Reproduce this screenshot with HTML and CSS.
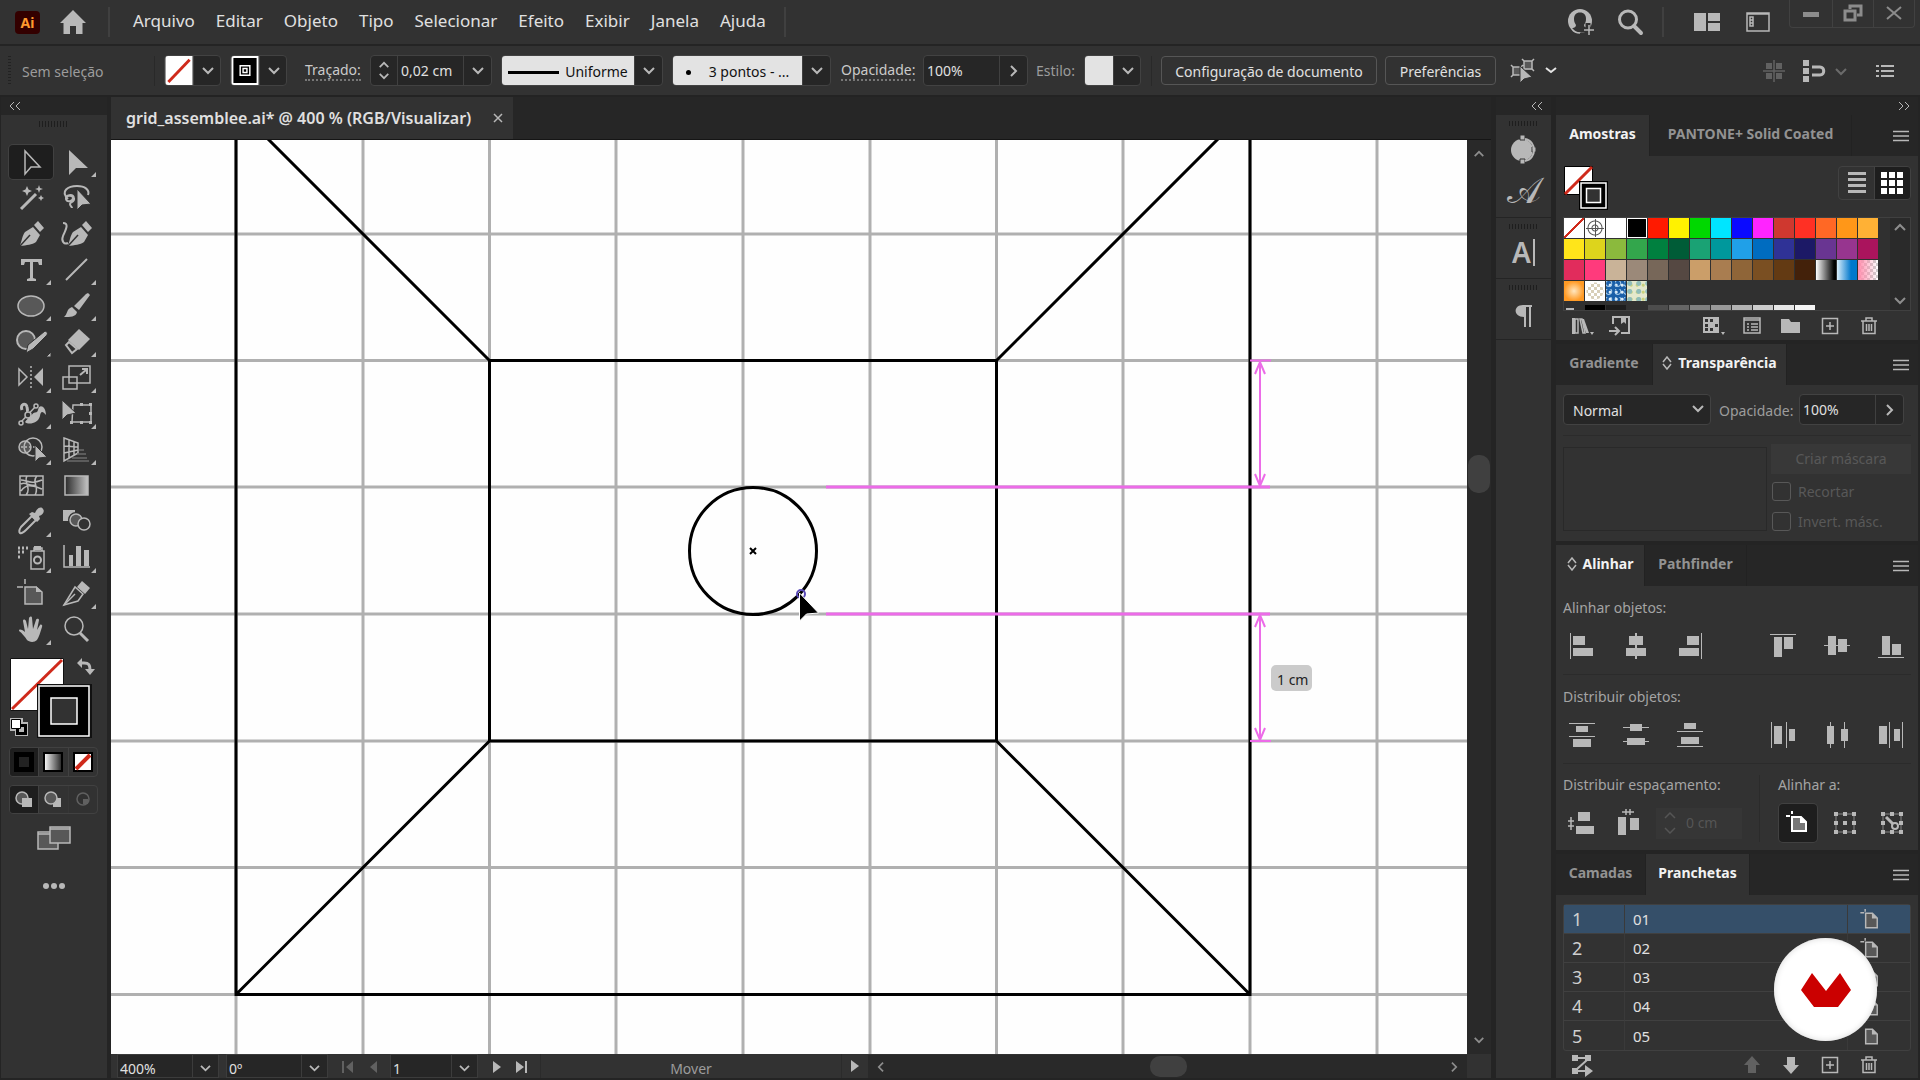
FILE: index.html
```html
<!DOCTYPE html>
<html lang="pt-BR">
<head>
<meta charset="utf-8">
<meta name="viewport" content="width=device-width, initial-scale=1">
<title>grid_assemblee.ai</title>
<link rel="stylesheet" href="styles.css">
</head>
<body>
<svg class="defs" aria-hidden="true">
  <symbol id="down" viewBox="0 0 14 10"><path class="ln2" d="M2 2l5 5 5-5"/></symbol>
  <symbol id="up" viewBox="0 0 14 10"><path class="ln2" d="M2 8l5-5 5 5"/></symbol>
  <symbol id="right" viewBox="0 0 10 14"><path class="ln2" d="M2 2l5 5-5 5"/></symbol>
  <symbol id="left" viewBox="0 0 10 14"><path class="ln2" d="M8 2L3 7l5 5"/></symbol>
  <symbol id="menu" viewBox="0 0 16 12"><path class="ln" d="M0 1.500h16M0 6h16M0 10.500h16"/></symbol>
  <symbol id="plus" viewBox="0 0 28 28"><path class="ln" d="M6.500 6.500h15v15h-15zM14 10v8M10 14h8"/></symbol>
  <symbol id="trash" viewBox="0 0 28 28"><path class="ln" d="M6 9h16M8 9v12.500h12V9M11 9V6h6v3M11.500 12v7M14 12v7M16.500 12v7"/></symbol>
  <symbol id="board" viewBox="0 0 28 28"><path class="ghost" d="M9.500 7.500h7l5 5v10h-12z"/><path class="ln" d="M9.500 7.500h7l5 5v10h-12z"/><path d="M16 7v6h6z"/></symbol>
  <symbol id="boardx" viewBox="0 0 28 28"><path class="ghost" d="M9.500 7.500h7l5 5v10h-12z"/><path class="ln" d="M9.500 7.500h7l5 5v10h-12zM9 3v3M4 7h4"/><path d="M16 7v6h6z"/></symbol>
  <symbol id="sort" viewBox="0 0 10 14"><path class="ln" d="M1 6l4-5 4 5M1 8l4 5 4-5"/></symbol>
  <symbol id="fs" viewBox="0 0 46 46">
    <path fill="#fff" stroke="#000" d="M1.500 1.500h28v28h-28z"/><path stroke="#cf2a1b" stroke-width="3" d="M2 29L29 2"/>
    <path fill="#000" d="M16 16h29v29H16z"/><path fill="#000" stroke="#fff" stroke-width="1.500" d="M18 18h25v25H18z"/><path fill="#323232" stroke="#fff" stroke-width="1.500" d="M23.500 23.500h14v14h-14z"/>
  </symbol>
</svg>

<header class="menubar">
  <span class="ai">Ai</span>
  <button class="ib home" aria-label="Início"><svg width="28" height="26" viewBox="0 0 28 26"><path d="M14 1L1 14h3.500v11H11v-8h6v8h6.500V14H27z"/></svg></button>
  <nav class="menus">
    <a href="#">Arquivo</a><a href="#">Editar</a><a href="#">Objeto</a><a href="#">Tipo</a><a href="#">Selecionar</a><a href="#">Efeito</a><a href="#">Exibir</a><a href="#">Janela</a><a href="#">Ajuda</a>
  </nav>
  <div class="topright">
    <button class="ib" aria-label="Conta"><svg width="30" height="28" viewBox="0 0 30 28"><circle cx="14" cy="13" r="12"/><path fill="#323232" d="M14 4.500c-4 0-6 2.500-6 6.500 0 3 1 4.500 2 6 0 2-1.500 2.500-4 3.500 2 3 5 4 8 4s6-1 8-4c-2.500-1-4-1.500-4-3.500 1-1.500 2-3 2-6 0-4-2-6.500-6-6.500z"/><path class="cut" d="M22 15v13M15 22h14"/><path class="ln" d="M6 21c2 3 5 4 8 4M23 17v10M18 22h10"/></svg></button>
    <button class="ib" aria-label="Pesquisar"><svg width="28" height="28" viewBox="0 0 28 28"><circle class="ln3" cx="12" cy="11.500" r="8.500"/><path class="ln4" d="M18 18l7 7"/></svg></button>
    <i class="vr tall"></i>
    <button class="ib" aria-label="Organizar"><svg width="28" height="20" viewBox="0 0 28 20"><path d="M1 1h12v18H1zM15 1h12v8H15zM15 11h12v8H15z"/></svg></button>
    <button class="ib" aria-label="Área de trabalho"><svg width="26" height="22" viewBox="0 0 26 22"><path class="ln" d="M2 2h22v18H2zM2 3h22M5 6h3v9H5zM5 9h3M5 12h3"/></svg></button>
  </div>
  <div class="win">
    <button aria-label="Minimizar"><svg width="16" height="16" viewBox="0 0 16 16"><path d="M0 7h16v5H0z"/></svg></button>
    <button aria-label="Restaurar"><svg width="20" height="18" viewBox="0 0 20 18"><path class="ln3" d="M7 5V2h11v9h-4M2 7h10v9H2z"/></svg></button>
    <button aria-label="Fechar"><svg width="16" height="16" viewBox="0 0 16 16"><path class="ln2" d="M1 2l14 12M15 2L1 14"/></svg></button>
  </div>
</header>

<section class="control">
  <i class="grip-v"></i>
  <span class="status dim">Sem seleção</span>
  <i class="vr"></i>
  <div class="combo c-fill"><svg class="sw" viewBox="0 0 28 30"><path fill="#fff" d="M0 0h28v30H0z"/><path stroke="#cf2a1b" stroke-width="3" d="M3 27L25 4"/></svg><button class="dd" aria-label="Preenchimento"><svg width="14" height="10"><use href="#down"/></svg></button></div>
  <div class="combo c-stroke"><svg class="sw" viewBox="0 0 28 30"><path fill="#fff" d="M0 0h28v30H0z"/><path d="M2 2h24v26H2z" fill="#000"/><path fill="#000" stroke="#fff" stroke-width="1.500" d="M9 10h10v10H9zM12 13h4v4h-4z"/></svg><button class="dd" aria-label="Cor do traçado"><svg width="14" height="10"><use href="#down"/></svg></button></div>
  <label class="dotted l-tr" for="stroke">Traçado:</label>
  <div class="combo c-width"><div class="spin"><button aria-label="Aumentar"><svg width="12" height="9"><use href="#up"/></svg></button><button aria-label="Diminuir"><svg width="12" height="9"><use href="#down"/></svg></button></div><input id="stroke" value="0,02 cm"><button class="dd" aria-label="Espessuras"><svg width="14" height="10"><use href="#down"/></svg></button></div>
  <div class="combo c-prof"><button class="light"><i class="line"></i>Uniforme</button><button class="dd" aria-label="Perfil"><svg width="14" height="10"><use href="#down"/></svg></button></div>
  <div class="combo c-brush"><button class="light"><i class="dot"></i>3 pontos - ...</button><button class="dd" aria-label="Pincel"><svg width="14" height="10"><use href="#down"/></svg></button></div>
  <label class="dotted l-op" for="op1">Opacidade:</label>
  <div class="combo c-op"><input id="op1" value="100%"><button class="dd" aria-label="Opacidades"><svg width="10" height="14"><use href="#right"/></svg></button></div>
  <span class="dim l-st">Estilo:</span>
  <div class="combo c-st"><i class="sw lightbox"></i><button class="dd" aria-label="Estilos"><svg width="14" height="10"><use href="#down"/></svg></button></div>
  <i class="vr v2"></i>
  <button class="btn b-doc">Configuração de documento</button>
  <button class="btn b-pref">Preferências</button>
  <button class="ib sel" aria-label="Selecionar similares"><svg width="52" height="26" viewBox="0 0 52 26"><path class="ghost" d="M14 3h8v9h-8zM3 9h8v8H3z"/><path class="ln" d="M14 3h8v8h-8zM12 1l2 2M24 1l-2 2M24 13l-2-2M3 9h8v8H3zM1 7l2 2M13 7l-2 2M1 19l2-2"/><path class="halo" d="M10 8v17l4-4 8-2z"/><path class="ln2 bright" d="M36 10l5 4 5-4"/></svg></button>
  <div class="cright">
    <button class="ib off" aria-label="Grade"><svg width="24" height="24" viewBox="0 0 24 24"><path d="M4 4h6v6H4zM14 4h6v6h-6zM4 14h6v6H4zM14 14h6v6h-6z"/><path class="ln" d="M12 1v22M1 12h22"/></svg></button>
    <button class="ib" aria-label="Ajustar"><svg width="46" height="24" viewBox="0 0 46 24"><path d="M1 1h6v6H1zM1 9h6v6H1zM1 17h6v6H1z"/><path class="ln3" d="M10 8h8c5 0 5 8 0 8h-8"/><path class="ln2 faint" d="M34 10l5 5 5-5"/></svg></button>
    <button class="ib" aria-label="Opções"><svg width="18" height="14" viewBox="0 0 18 14"><path class="ln2" d="M0 2h3M5 2h13M0 7h3M5 7h13M0 12h3M5 12h13"/></svg></button>
  </div>
</section>

<main class="work">
  <aside class="toolbar">
    <div class="strip"><button class="ib" aria-label="Recolher"><svg width="12" height="10" viewBox="0 0 12 10"><path class="ln1" d="M5 1L1 5l4 4M11 1L7 5l4 4"/></svg></button></div>
    <i class="grip"></i>
    <div class="tools">
      <button class="on" aria-label="Seleção"><svg viewBox="0 0 44 34"><path class="ln" d="M16 6v23l6-7h9z"/></svg></button>
      <button aria-label="Seleção direta"><svg viewBox="0 0 44 34"><path d="M14 5v25l7-7h12zM41 27v5h-5z"/></svg></button>
      <button aria-label="Varinha mágica"><svg viewBox="0 0 44 34"><path class="ln3" d="M12 28l15-15"/><path d="M18 5l1.500 3.500L23 10l-3.500 1.500L18 15l-1.500-3.500L13 10l3.500-1.500zM30 4l1 3 3 1-3 1-1 3-1-3-3-1 3-1zM32 14l1 2 2 1-2 1-1 2-1-2-2-1 2-1z"/></svg></button>
      <button aria-label="Laço"><svg viewBox="0 0 44 34"><path class="ln2" d="M13 18c-8-8 0-13 9-13 8 0 13 4 11 9M11 17c0-3 7-3 7 0s-6 5-7 1c-1-4 7-6 8-1 1 4-4 4-4 6s2 3 2 4"/><path class="halo" d="M22 8v21l5-5 9-1z"/></svg></button>
      <button aria-label="Caneta"><svg viewBox="0 0 44 34"><path d="M11 28c2-4 2-9 5-13l8-5 7 8-4 7c-4 3-9 3-16 4zM25 8l4-4 6 7-4 4z"/><path class="cut1" d="M11 29l10-11"/></svg></button>
      <button aria-label="Curvatura"><svg viewBox="0 0 44 34"><path d="M13 28c2-4 2-9 5-13l8-5 7 8-4 7c-4 3-9 3-16 4zM27 8l4-4 6 7-4 4z"/><path class="cut1" d="M13 29l10-11"/><path class="ln2" d="M8 6c7 0 2 8 0 13s1 9 5 7"/></svg></button>
      <button aria-label="Texto"><svg viewBox="0 0 44 34"><path d="M12 6h21v6h-3l-1-3h-5v16l3 1v2h-9v-2l3-1V9h-5l-1 3h-3zM42 27v5h-5z"/></svg></button>
      <button aria-label="Segmento de linha"><svg viewBox="0 0 44 34"><path class="ln2" d="M11 27L32 6"/><path d="M41 27v5h-5z"/></svg></button>
      <button aria-label="Elipse"><svg viewBox="0 0 44 34"><ellipse class="ghost" cx="22" cy="17" rx="13" ry="10"/><ellipse class="ln" cx="22" cy="17" rx="13" ry="10"/><path d="M42 27v5h-5z"/></svg></button>
      <button aria-label="Pincel"><svg viewBox="0 0 44 34"><path d="M33 4l2 2-11 15-5-4L31 5zM17 18l5 5c-1 5-7 5-13 5 4-3 2-8 8-10zM41 27v5h-5z"/></svg></button>
      <button aria-label="Bolha"><svg viewBox="0 0 44 34"><circle class="ghost" cx="17" cy="15" r="9"/><circle class="ln2" cx="17" cy="15" r="9"/><path class="halo" d="M36 6c3 1 3 3 1 5L24 24l-7 4 2-8zM42 27v5h-5z"/></svg></button>
      <button aria-label="Borracha"><svg viewBox="0 0 44 34"><path d="M24 4l11 10-11 11-11-10z"/><path class="ln2" d="M14 17l-3 3 6 8 5-4z"/><path d="M41 27v5h-5z"/></svg></button>
      <button aria-label="Refletir"><svg viewBox="0 0 44 34"><path class="ln" d="M10 8v16l8-8z"/><path class="ln dash" d="M22 5v23"/><path d="M34 7v18l-9-9zM42 27v5h-5z"/></svg></button>
      <button aria-label="Redimensionar"><svg viewBox="0 0 44 34"><path class="ln" d="M14 5h21v17H14zM8 16h14v12H8z"/><path class="ln2" d="M25 14l6-5M27 8h5v5"/><path d="M41 27v5h-5z"/></svg></button>
      <button aria-label="Largura"><svg viewBox="0 0 44 34"><path class="ln3" d="M13 13c-2-6 4-8 5-3 1 4 0 8 3 10"/><path d="M19 20c3-7 9-2 10-7 1-7 8-4 8 5-3-3-5-5-6 1-2 8-12 9-15 6z"/><path class="cut" d="M14 23L26 11"/><path class="ln" d="M12 25L27 9"/><circle class="ring" cx="12" cy="26" r="2"/><circle class="ring" cx="27" cy="9" r="2"/><circle class="ring" cx="19" cy="18" r="3"/><path d="M42 27v5h-5z"/></svg></button>
      <button aria-label="Transformação livre"><svg viewBox="0 0 44 34"><path class="ln" d="M18 8h18v17H17z"/><path d="M34 6h3v3h-3zM34 24h3v3h-3zM15 24h3v3h-3zM25 6h3v3h-3zM25 24h3v3h-3zM34 15h3v3h-3zM41 27v5h-5z"/><path class="halo" d="M7 3v20l5-5 9-2z"/></svg></button>
      <button aria-label="Construtor de formas"><svg viewBox="0 0 44 34"><circle class="ghost" cx="16" cy="14" r="6"/><circle class="ln" cx="16" cy="14" r="6"/><circle class="ln" cx="24" cy="14" r="9"/><path class="ln dash" d="M12 14h14"/><path class="halo" d="M26 12v17l4-4 8-1z"/><path d="M42 27v5h-5z"/></svg></button>
      <button aria-label="Grade de perspectiva"><svg viewBox="0 0 44 34"><path class="ln" d="M9 5l14 5v10L9 28zM14 7v18M19 8v14M9 13l14 1M9 20l14-3"/><path class="ln faint" d="M24 17h5M22 21h9M17 25h15M12 28h22"/><path d="M41 27v5h-5z"/></svg></button>
      <button aria-label="Malha"><svg viewBox="0 0 44 34"><path class="ln" d="M11 7h23v19H11zM12 11c6 0 9 5 21 0M12 22c6-8 12-5 21-2M18 7c-4 6 5 12-1 19M28 7c-6 6 3 11-2 19M12 15c5-3 8 3 14 1"/></svg></button>
      <button aria-label="Gradiente"><svg viewBox="0 0 44 34"><defs><linearGradient id="g1"><stop offset="0" stop-color="#2a2a2a"/><stop offset="1" stop-color="#c4c4c4"/></linearGradient></defs><path fill="url(#g1)" stroke="#b8b8b8" stroke-width="1.500" d="M10 7h23v19H10z"/></svg></button>
      <button aria-label="Conta-gotas"><svg viewBox="0 0 44 34"><path class="ln2" d="M23 11L12 22c-2 3-2 5-1 6 2 1 4-1 6-3l10-10z"/><path d="M20 9l3-2 3 1c2-5 6-7 8-4 2 2 0 6-4 7l1 3-3 3z"/><path d="M42 27v5h-5z"/></svg></button>
      <button aria-label="Mistura"><svg viewBox="0 0 44 34"><path d="M8 5h12v11H8z"/><circle class="ghost cutring" cx="21" cy="15" r="7"/><circle class="ln" cx="21" cy="15" r="6"/><circle class="ring" cx="29" cy="19" r="6"/></svg></button>
      <button aria-label="Spray de símbolos"><svg viewBox="0 0 44 34"><path class="ln" d="M22 10h13v18H22zM25 10V7h8v3"/><path d="M25 5h7v4h-7z"/><circle class="ln2" cx="28.500" cy="19" r="3.500"/><path class="ln3 dash" d="M9 7h12M9 11h8M9 16h3"/><path d="M42 27v5h-5z"/></svg></button>
      <button aria-label="Gráfico"><svg viewBox="0 0 44 34"><path class="ln" d="M9 4v22h26"/><path d="M14 14h4v11h-4zM21 5h5v20h-5zM29 9h5v16h-5zM41 27v5h-5z"/></svg></button>
      <button aria-label="Prancheta"><svg viewBox="0 0 44 34"><path class="ghost" d="M16 10h11l6 5v12H16z"/><path class="ln" d="M16 10h11l6 5v12H16zM16 2v5M8 10h6"/><path d="M27 9v6h6z"/></svg></button>
      <button aria-label="Fatia"><svg viewBox="0 0 44 34"><path class="ln" d="M9 28l11-18 8 7-5 7z"/><path class="ln" d="M9 28l11-11"/><path d="M27 4l8 7-5 6-8-7zM41 27v5h-5z"/></svg></button>
      <button aria-label="Mão"><svg viewBox="0 0 44 34"><path d="M18 27c-2-3-5-7-8-9 0-2 2-2 6 1l-2-11c0-2 2-2 3 0l2 8 1-11c1-2 3-2 3 0l1 11 3-9c1-2 3-1 3 0l-2 10 3-5c1-1 3 0 2 2-2 6-3 10-5 13-3 3-8 2-10 0z"/><path d="M42 27v5h-5z"/></svg></button>
      <button aria-label="Zoom"><svg viewBox="0 0 44 34"><circle class="ln" cx="19" cy="13" r="9"/><path class="ln3" d="M25 20l8 8"/></svg></button>
    </div>
    <svg class="fillstroke" width="90" height="84" viewBox="0 0 90 84">
      <path fill="#fff" stroke="#111" d="M.500 1.500h53v52H.500z"/><path stroke="#cf2a1b" stroke-width="3" d="M2 52L52 3"/>
      <path fill="#111" d="M27 27h55v54H27z"/><path fill="#000" stroke="#fff" stroke-width="1.500" d="M29 29h50v50H29z"/><path fill="#323232" stroke="#fff" stroke-width="1.500" d="M41 41h26v26H41z"/>
      <path class="ln3" d="M71 6h3c5 0 6 2 6 7"/><path d="M67 6l5-5v10zM75 12h10l-5 6z"/>
      <path fill="#b8b8b8" d="M0 61h13v4h5v14H5v-5H0z"/><path fill="#000" d="M6 67h11v11H6z"/><path fill="#b8b8b8" d="M9 70h5v5H9z"/><path fill="#fff" stroke="#000" d="M1.500 62.500h9v9h-9z"/>
    </svg>
    <div class="seg"><button class="on" aria-label="Cor"><svg width="20" height="20"><path fill="#222" stroke="#000" stroke-width="5" d="M2.500 2.500h15v15h-15z"/></svg></button><button aria-label="Gradiente"><svg width="20" height="20"><defs><linearGradient id="g2"><stop stop-color="#fff"/><stop offset="1" stop-color="#222"/></linearGradient></defs><path fill="url(#g2)" stroke="#000" stroke-width="2" d="M1 1h18v18H1z"/></svg></button><button aria-label="Nenhum"><svg width="20" height="20"><path fill="#fff" stroke="#000" stroke-width="2" d="M1 1h18v18H1z"/><path stroke="#cf2a1b" stroke-width="4" d="M3 17L17 3"/></svg></button></div>
    <div class="seg low"><button class="on" aria-label="Desenho normal"><svg width="18" height="18"><circle class="ghost" cx="7" cy="7" r="6"/><circle class="ln" cx="7" cy="7" r="6"/><path d="M7 7h10v9H7z"/></svg></button><button aria-label="Desenhar atrás"><svg width="18" height="18"><path d="M9 7h8v9H9z"/><circle class="ghost" cx="7" cy="7" r="6"/><circle class="ln" cx="7" cy="7" r="6"/></svg></button><button class="off" aria-label="Desenhar dentro"><svg width="18" height="18"><circle class="ln" cx="9" cy="8" r="6"/><path d="M9 8h5v5H9z"/></svg></button></div>
    <button class="ib screen" aria-label="Modo de tela"><svg width="36" height="26" viewBox="0 0 36 26"><path class="ghost" d="M2 8h20v16H2z"/><path class="ln" d="M2 7h20v17H2zM2 9h20"/><path class="ghost" d="M14 2h20v16H14z"/><path class="ln" d="M14 2h20v16H14zM14 4h20"/></svg></button>
    <button class="ib more" aria-label="Mais"><svg width="24" height="8"><circle cx="4" cy="4" r="3"/><circle cx="12" cy="4" r="3"/><circle cx="20" cy="4" r="3"/></svg></button>
  </aside>

  <section class="doc">
    <div class="tabs"><div class="tab">grid_assemblee.ai* @ 400 % (RGB/Visualizar)<button class="ib" aria-label="Fechar aba"><svg width="10" height="10" viewBox="0 0 10 10"><path class="ln" d="M1 1l8 8M9 1L1 9"/></svg></button></div></div>
    <div class="stage">
      <div class="canvas">
        <svg viewBox="111 140 1356 914" preserveAspectRatio="xMidYMid slice">
          <path class="g" d="M236 140v914M363 140v914M489.500 140v914M616 140v914M743 140v914M870 140v914M996.500 140v914M1123 140v914M1250 140v914M1377 140v914M111 234h1356M111 360.500h1356M111 487h1356M111 614h1356M111 741h1356M111 867.500h1356M111 994.500h1356"/>
          <path class="k" d="M236 130v864.500h1014V130M489.500 360.500h507v380.500h-507zM489.500 360.500L259 130M996.500 360.500L1227 130M489.500 741L236 994.500M996.500 741L1250 994.500"/>
          <circle class="k" cx="753" cy="551" r="63.500"/>
          <path class="k2" d="M750 548l6 6M756 548l-6 6"/>
          <path class="p p3w" d="M826 487h444M826 614h444"/>
          <path class="p" d="M1250 360.500h21M1250 741h21M1260 361v126M1260 614v127M1255 374l5-12 5 12M1255 474l5 12 5-12M1255 627l5-12 5 12M1255 728l5 12 5-12"/>
          <circle class="anchor" cx="801" cy="594" r="4"/>
          <path fill="#000" stroke="#fff" d="M799.500 593v28l7-7 12-1z"/>
          <rect x="1271" y="665" width="41" height="26" rx="5" fill="#cbcbcb"/>
          <text x="1277" y="685">1 cm</text>
        </svg>
      </div>
      <div class="vscroll"><svg width="12" height="9"><use href="#up"/></svg><i></i><svg width="12" height="9"><use href="#down"/></svg></div>
    </div>
    <div class="statusbar">
      <div class="sf"><input aria-label="Zoom" value="400%"><button aria-label="Níveis"><svg width="13" height="9"><use href="#down"/></svg></button></div>
      <div class="sf"><input aria-label="Rotação" value="0º"><button aria-label="Ângulos"><svg width="13" height="9"><use href="#down"/></svg></button></div>
      <div class="nav off"><button aria-label="Primeira"><svg width="14" height="14"><path d="M1 1h2v12H1zM12 1v12L5 7z"/></svg></button><button aria-label="Anterior"><svg width="8" height="14"><path d="M8 1v12L1 7z"/></svg></button></div>
      <div class="sf"><input aria-label="Prancheta" value="1"><button aria-label="Pranchetas"><svg width="13" height="9"><use href="#down"/></svg></button></div>
      <div class="nav"><button aria-label="Próxima"><svg width="8" height="14"><path d="M0 1v12l8-6z"/></svg></button><button aria-label="Última"><svg width="14" height="14"><path d="M1 1v12l8-6zM10 1h2v12h-2z"/></svg></button></div>
      <span class="toolname">Mover</span>
      <button class="play" aria-label="Exibir"><svg width="8" height="14"><path d="M0 1v12l8-6z"/></svg></button>
      <div class="hscroll"><svg width="9" height="12"><use href="#left"/></svg><i></i><svg width="9" height="12"><use href="#right"/></svg></div>
    </div>
  </section>

  <aside class="dock">
    <div class="strip end"><button class="ib" aria-label="Expandir"><svg width="12" height="10" viewBox="0 0 12 10"><path class="ln1" d="M5 1L1 5l4 4M11 1L7 5l4 4"/></svg></button></div>
    <div class="dg big"><i class="grip"></i><button class="ib" aria-label="Cor"><svg width="30" height="32" viewBox="0 0 30 32"><circle cx="13" cy="16" r="11"/><path class="halo" d="M11 1h5v5h-5zM11 25h5v5h-5zM23 13h4v5h-4z"/><path class="ln2" d="M16 5c6 1 9 6 9 11s-3 10-9 11"/></svg></button><button class="ib script">𝒜</button></div>
    <div class="dg"><i class="grip"></i><button class="ib char">A<i></i></button></div>
    <div class="dg"><i class="grip"></i><button class="ib para" aria-label="Parágrafo"><svg width="20" height="26" viewBox="0 0 20 26"><path d="M18 2v2h-1v20h-2V4h-3v20h-2V14C-1 14-1 2 9 2z"/></svg></button></div>
    <div class="dg rest"></div>
  </aside>

  <aside class="panels">
    <div class="strip end"><button class="ib" aria-label="Recolher painéis"><svg width="12" height="10" viewBox="0 0 12 10"><path class="ln1" d="M1 1l4 4-4 4M7 1l4 4-4 4"/></svg></button></div>

    <section class="panel p1">
      <div class="ptabs"><button class="act w94">Amostras</button><button class="w202">PANTONE+ Solid Coated</button><button class="pm" aria-label="Menu"><svg width="16" height="12"><use href="#menu"/></svg></button></div>
      <div class="pb">
        <div class="swtop"><svg width="46" height="46"><use href="#fs"/></svg>
          <div class="toggle"><button aria-label="Lista"><svg width="18" height="22"><path d="M0 0h18v3H0zM0 6h18v3H0zM0 12h18v3H0zM0 18h18v3H0z"/></svg></button><button class="on" aria-label="Miniaturas"><svg width="22" height="22"><path fill="#fff" d="M0 0h6v6H0zM8 0h6v6H8zM16 0h6v6h-6zM0 8h6v6H0zM8 8h6v6H8zM16 8h6v6h-6zM0 16h6v6H0zM8 16h6v6H8zM16 16h6v6h-6z"/></svg></button></div></div>
        <div class="swlist"><div class="swatches" id="swatches"></div><div class="swscroll"><svg width="14" height="10"><use href="#up"/></svg><svg width="14" height="10"><use href="#down"/></svg></div></div>
        <div class="pf">
          <button aria-label="Bibliotecas"><svg viewBox="0 0 28 28"><path class="ln" d="M7 7h3v14H7zM12 7l3 14h2L14 7z"/><path d="M4 6h3v16H4zM13 7h3l5 14h-3zM22 20h4l-2 3z"/></svg></button>
          <button aria-label="Adicionar à biblioteca"><svg viewBox="0 0 28 28"><path class="ln2" d="M6 12V5h16v16h-8M2 19h9M8 15l4 4-4 4"/><path d="M14 5h5v7l-2-2-3 2z"/></svg></button>
          <span class="push"></span>
          <button aria-label="Tipos"><svg viewBox="0 0 28 28"><path d="M4 5h16v16H4z"/><path fill="#323232" d="M6 7h3v3H6zM11 7h3v3h-3zM6 12h3v3H6zM16 12h3v3h-3zM11 16h3v3h-3zM6 16h3v3H6z"/><path d="M22 20h4l-2 3z"/></svg></button>
          <button aria-label="Opções de amostra"><svg viewBox="0 0 28 28"><path class="ln" d="M6 6h16v15H6zM6 8h16M9 12h2M13 12h7M9 15h2M13 15h7M9 18h2M13 18h7"/></svg></button>
          <button aria-label="Novo grupo"><svg viewBox="0 0 28 28"><path d="M4 7h8l2 3h9v11H4z"/></svg></button>
          <button aria-label="Nova amostra"><svg><use href="#plus"/></svg></button>
          <button aria-label="Excluir"><svg><use href="#trash"/></svg></button>
        </div>
      </div>
    </section>

    <section class="panel p2">
      <div class="ptabs"><button class="w97">Gradiente</button><button class="act w134"><svg width="10" height="14"><use href="#sort"/></svg>Transparência</button><button class="pm" aria-label="Menu"><svg width="16" height="12"><use href="#menu"/></svg></button></div>
      <div class="pb">
        <div class="trow"><div class="selw"><select aria-label="Modo"><option>Normal</option></select><svg width="14" height="10"><use href="#down"/></svg></div><label class="dim" for="op2">Opacidade:</label><div class="combo c-op2"><input id="op2" value="100%"><button class="dd" aria-label="Opacidades"><svg width="10" height="14"><use href="#right"/></svg></button></div></div>
        <div class="mask"><div class="preview"></div><div class="mopts"><button disabled>Criar máscara</button><label><input type="checkbox" disabled>Recortar</label><label><input type="checkbox" disabled>Invert. másc.</label></div></div>
      </div>
    </section>

    <section class="panel p3">
      <div class="ptabs"><button class="act w89"><svg width="10" height="14"><use href="#sort"/></svg>Alinhar</button><button class="w102">Pathfinder</button><button class="pm" aria-label="Menu"><svg width="16" height="12"><use href="#menu"/></svg></button></div>
      <div class="pb">
        <div class="asec"><span>Alinhar objetos:</span><div class="arow">
          <button aria-label="À esquerda"><svg viewBox="0 0 28 28"><path d="M2 1h1v26H2zM5 4h12v9H5zM5 16h20v8H5z"/></svg></button>
          <button aria-label="Centro horizontal"><svg viewBox="0 0 28 28"><path d="M13 1h2v26h-2zM7 4h14v9H7zM4 16h20v8H4z"/></svg></button>
          <button aria-label="À direita"><svg viewBox="0 0 28 28"><path d="M25 1h1v26h-1zM11 4h12v9H11zM3 16h20v8H3z"/></svg></button>
          <i></i>
          <button aria-label="Superior"><svg viewBox="0 0 28 28"><path d="M1 2h26v1H1zM5 5h8v20H5zM15 5h9v12h-9z"/></svg></button>
          <button aria-label="Centro vertical"><svg viewBox="0 0 28 28"><path d="M1 13h26v1H1zM5 4h8v19H5zM15 7h9v13h-9z"/></svg></button>
          <button aria-label="Inferior"><svg viewBox="0 0 28 28"><path d="M1 25h26v1H1zM5 4h8v19H5zM15 12h9v11h-9z"/></svg></button></div></div>
        <div class="asec"><span>Distribuir objetos:</span><div class="arow">
          <button aria-label="Distribuir topo"><svg viewBox="0 0 28 28"><path d="M1 2h26v1H1zM8 5h12v6H8zM1 15h26v1H1zM5 18h18v8H5z"/></svg></button>
          <button aria-label="Distribuir centro"><svg viewBox="0 0 28 28"><path d="M1 6h26v1H1zM8 3h12v7H8zM1 20h26v1H1zM5 17h18v7H5z"/></svg></button>
          <button aria-label="Distribuir base"><svg viewBox="0 0 28 28"><path d="M1 10h26v1H1zM8 2h12v6H8zM1 25h26v1H1zM5 16h18v7H5z"/></svg></button>
          <i></i>
          <button aria-label="Distribuir esquerda"><svg viewBox="0 0 28 28"><path d="M2 1h1v26H2zM5 5h8v18H5zM17 1h1v26h-1zM20 8h6v12h-6z"/></svg></button>
          <button aria-label="Distribuir meio"><svg viewBox="0 0 28 28"><path d="M7 1h1v26H7zM4 5h7v18H4zM21 1h1v26h-1zM18 8h7v12h-7z"/></svg></button>
          <button aria-label="Distribuir direita"><svg viewBox="0 0 28 28"><path d="M2 5h8v18H2zM12 1h1v26h-1zM17 8h6v12h-6zM25 1h1v26h-1z"/></svg></button></div></div>
        <div class="asplit">
          <div class="space"><span>Distribuir espaçamento:</span><div class="srow">
            <button aria-label="Espaço vertical"><svg viewBox="0 0 28 28"><path d="M10 3h12v9H10zM8 17h18v8H8z"/><path class="ln" d="M3 8v13M0 12h6M0 17h6"/></svg></button>
            <button aria-label="Espaço horizontal"><svg viewBox="0 0 28 28"><path d="M2 8h8v18H2zM14 9h9v12h-9z"/><path class="ln" d="M6 3h12M10 0v6M14 0v6"/></svg></button>
            <div class="cm"><svg viewBox="0 0 12 22"><path class="ln" d="M1 6l5-5 5 5M1 16l5 5 5-5"/></svg><input aria-label="Espaçamento" value="0 cm" disabled></div></div></div>
          <div class="to"><span>Alinhar a:</span><div class="srow">
            <button class="on" aria-label="Prancheta"><svg viewBox="0 0 28 28"><path fill="#777" stroke="#fff" stroke-width="2" d="M8 8h9l5 5v9H8z"/><path stroke="#fff" stroke-width="2" d="M8 2v3M2 7h4"/><path fill="#fff" d="M16 7v7h7z"/></svg></button>
            <button aria-label="Seleção"><svg viewBox="0 0 28 28"><path class="ln faint" d="M5 5h18v18H5z"/><path d="M3 3h4v4H3zM12 3h4v4h-4zM21 3h4v4h-4zM3 12h4v4H3zM12 12h4v4h-4zM21 12h4v4h-4zM3 21h4v4H3zM12 21h4v4h-4zM21 21h4v4h-4z"/></svg></button>
            <button aria-label="Objeto-chave"><svg viewBox="0 0 28 28"><path class="ln faint" d="M5 5h18v18H5z"/><path d="M3 3h4v4H3zM12 3h4v4h-4zM21 3h4v4h-4zM3 12h4v4H3zM21 12h4v4h-4zM3 21h4v4H3zM12 21h4v4h-4zM21 21h4v4h-4z"/><path class="ln3" d="M8 8l7 7"/><circle class="ln2" cx="17" cy="17" r="3"/></svg></button></div></div>
        </div>
      </div>
    </section>

    <section class="panel p4">
      <div class="ptabs"><button class="w90">Camadas</button><button class="act w104">Pranchetas</button><button class="pm" aria-label="Menu"><svg width="16" height="12"><use href="#menu"/></svg></button></div>
      <div class="pb">
        <table class="boards"><tbody>
          <tr class="sel"><td>1</td><td>01</td><td><svg width="28" height="28"><use href="#boardx"/></svg></td></tr>
          <tr><td>2</td><td>02</td><td><svg width="28" height="28"><use href="#boardx"/></svg></td></tr>
          <tr><td>3</td><td>03</td><td><svg width="28" height="28"><use href="#board"/></svg></td></tr>
          <tr><td>4</td><td>04</td><td><svg width="28" height="28"><use href="#board"/></svg></td></tr>
          <tr><td>5</td><td>05</td><td><svg width="28" height="28"><use href="#board"/></svg></td></tr>
        </tbody></table>
        <div class="pf">
          <button aria-label="Reorganizar"><svg viewBox="0 0 28 28"><path d="M4 4h6v6H4zM17 4h6v6h-6zM4 17h6v6H4zM17 14l8 6-8 6z"/><path class="ln2" d="M10 7h8M19 9L9 18M10 20h8"/></svg></button>
          <span class="push"></span>
          <button class="off" aria-label="Mover para cima"><svg viewBox="0 0 28 28"><path d="M14 5l8 9h-4v8h-8v-8H6z"/></svg></button>
          <button aria-label="Mover para baixo"><svg viewBox="0 0 28 28"><path d="M14 23l8-9h-4V6h-8v8H6z"/></svg></button>
          <button aria-label="Nova prancheta"><svg><use href="#plus"/></svg></button>
          <button aria-label="Excluir prancheta"><svg><use href="#trash"/></svg></button>
        </div>
      </div>
    </section>
  </aside>
</main>
<div class="brand"><svg width="50" height="34" viewBox="0 0 50 34"><path fill="#cb0000" d="M11 0L0 17l13 17h24l13-17L39 0 25 18z"/></svg></div>
<script src="swatches.js"></script>
</body>
</html>
```
FILE: swatches.js
```js
const colors = ['none', 'reg', '#ffffff', 'black', '#ff1a00', '#fff200', '#00d800', '#00e5ff', '#0a0aff', '#ff24ff', '#cf382f', '#ff3024', '#ff6825', '#ff9718', '#ffb135',
  '#ffe51a', '#ddd41c', '#8bba3d', '#33a64c', '#00803f', '#005c37', '#1aa274', '#00989c', '#20a0e8', '#006cc0', '#2f3296', '#1c1966', '#693592', '#97358f', '#aa145d',
  '#e12c5c', '#ff3a7c', '#c9b398', '#9b8979', '#776759', '#554842', '#cb9e69', '#a97d50', '#8f6538', '#7a4f22', '#633a13', '#43210a',
  'linear-gradient(90deg,#fff,#000 90%)', 'linear-gradient(90deg,#d9eefb,#0078cc 70%)', 'fade',
  'radial-gradient(#ffe7c0,#ff9a24 70%)', 'dots', 'blue', 'leaf'];
const grays = ['group', '#000000', '#1d1d1d', 'gap', '#4d4d4d', '#666666', '#808080', '#999999', '#b3b3b3', '#cccccc', '#e6e6e6', '#f5f5f5'];
const box = document.getElementById('swatches');

function add(list, parent) {
  for (const c of list) {
    const b = document.createElement('button');
    b.className = 'swatch';
    b.setAttribute('aria-label', 'Amostra');
    if (c[0] === '#' || c.includes('(')) b.style.background = c;
    else b.classList.add('sw-' + c);
    parent.append(b);
  }
}
const main = document.createElement('div');
main.className = 'swrow';
add(colors, main);
const low = document.createElement('div');
low.className = 'swrow second';
add(grays, low);
box.append(main, low);
```
FILE: styles.css
```css
* { box-sizing: border-box; }
body { margin: 0; height: 100vh; overflow: hidden; display: flex; flex-direction: column; background: #1c1c1c; color: #e0e0e0; font: 14px/20px "Noto Sans", "Open Sans", sans-serif; }
button, input, select { font: inherit; color: inherit; border: 0; background: none; padding: 0; margin: 0; min-width: 0; }
button { display: flex; align-items: center; justify-content: center; flex: none; }
a { color: inherit; text-decoration: none; }
i { font-style: normal; display: block; flex: none; }
svg { fill: #b8b8b8; display: block; flex: none; }
.defs { display: none; }
.ln, .ln1, .ln2, .ln3, .ln4 { fill: none; stroke: #b8b8b8; stroke-width: 1.500; }
.ln1 { stroke-width: 1; }
.ln2 { stroke-width: 2; }
.ln3 { stroke-width: 3; }
.ln4 { stroke-width: 4; stroke-linecap: round; }
.bright { stroke: #e4e4e4; }
.faint { stroke: #6b6b6b; }
.ghost { fill: #585858; }
.ring { fill: #323232; stroke: #b8b8b8; stroke-width: 1.500; }
.cutring { stroke: #323232; stroke-width: 2; }
.cut { stroke: #323232; stroke-width: 5; fill: none; }
.cut1 { stroke: #323232; stroke-width: 1.500; fill: none; }
.halo { stroke: #323232; stroke-width: 1; }
.dash { stroke-dasharray: 2 2; }
.off { opacity: .35; }
.dim { color: #9c9c9c; }
.vr { width: 1px; height: 30px; background: #292929; }

.menubar { flex: none; height: 46px; background: #323232; border-bottom: 2px solid #242424; display: flex; align-items: center; padding: 0 5px 0 15px; }
.ai { width: 25px; height: 23px; border-radius: 4px; background: #330000; color: #ff9a2e; font-weight: 700; font-size: 14px; line-height: 23px; text-align: center; }
.home { margin-left: 19px; }
.menus { display: flex; gap: 21px; margin-left: 21px; padding: 0 18px 2px 23px; border-left: 2px solid #404040; border-right: 2px solid #404040; height: 30px; align-items: center; font-size: 17px; line-height: 26px; }
.topright { margin-left: auto; display: flex; align-items: center; gap: 20px; }
.tall { background: #404040; width: 2px; }
.topright .tall { margin: 0 9px 0 -2px; }
.topright button:last-child { margin-left: 4px; }
.win { display: flex; height: 28px; align-self: flex-start; margin-left: 18px; border: 1px solid #414141; border-top: 0; border-radius: 0 0 4px 4px; }
.win button { width: 41px; border-left: 1px solid #414141; padding-bottom: 1px; }
.win button:first-child { width: 42px; border-left: 0; }
.win svg { fill: #8c8c8c; }
.win .ln2, .win .ln3 { stroke: #8c8c8c; }

.control { flex: none; height: 51px; background: #323232; border-bottom: 2px solid #232323; display: flex; align-items: center; padding: 0 25px 0 8px; }
.grip-v { width: 3px; height: 29px; background: repeating-linear-gradient(#222 0 1px, transparent 1px 3px); }
.status { width: 143px; padding: 2px 0 0 11px; }
.combo { display: flex; height: 31px; border: 1px solid #424242; border-radius: 4px; background: #262626; overflow: hidden; }
.combo .sw { width: 28px; height: 29px; }
.lightbox { background: #e3e3e3; }
.dd { width: 28px; border-left: 1px solid #404040; }
.dd svg .ln2, .combo .ln2 { stroke: #dcdcdc; }
.combo input { flex: 1; padding: 0 3px; font-size: 14px; }
.c-fill { margin-left: 9px; width: 57px; }
.c-stroke { margin-left: 9px; width: 57px; }
.dotted { border-bottom: 2px dotted #777; line-height: 18px; padding-top: 1px; color: #cacaca; white-space: nowrap; }
.l-tr { margin-left: 18px; width: 56px; }
.c-width { margin-left: 9px; width: 122px; }
.spin { width: 27px; border-right: 1px solid #404040; display: flex; flex-direction: column; align-items: center; justify-content: space-evenly; }
.light { flex: 1; background: #e3e3e3; color: #111; gap: 6px; white-space: nowrap; padding-top: 3px; }
.light .line { width: 51px; height: 3px; background: #000; }
.light .dot { width: 5px; height: 5px; border-radius: 50%; background: #000; margin-right: 12px; }
.c-prof { margin-left: 9px; width: 162px; }
.c-brush { margin-left: 9px; width: 159px; }
.l-op { margin-left: 10px; width: 74px; }
.c-op { margin-left: 8px; width: 105px; }
.l-st { margin-left: 8px; width: 48px; }
.c-st { width: 57px; }
.v2 { margin: 0 9px 0 10px; }
.btn { border: 1px solid #565656; border-radius: 4px; height: 29px; white-space: nowrap; padding-top: 2px; }
.b-doc { width: 216px; }
.b-pref { width: 111px; margin-left: 8px; }
.sel { margin-left: 14px; }
.cright { margin-left: auto; display: flex; gap: 16px; align-items: center; }
.cright button:last-child { margin-left: 12px; margin-right: 1px; }

.work { flex: 1; min-height: 0; display: flex; padding: 0 2px 2px 1px; background: #242424; }
.strip { height: 18px; flex: none; background: #262626; display: flex; align-items: center; padding: 0 8px; }
.strip.end { justify-content: flex-end; }
.grip { width: 30px; height: 5px; margin: 6px auto 0; background: repeating-linear-gradient(90deg, #1e1e1e 0 1px, transparent 1px 3px); }
.toolbar { width: 106px; flex: none; background: #323232; display: flex; flex-direction: column; align-items: flex-start; overflow: hidden; }
.toolbar .strip { width: 100%; }
.toolbar .grip { height: 6px; margin-left: 38px; }
.tools { display: grid; grid-template-columns: 44px 44px; gap: 2px; padding: 18px 0 0 8px; }
.tools button { height: 34px; border-radius: 4px; }
.tools svg { width: 44px; height: 34px; }
.on { background: #1e1e1e; box-shadow: 0 0 0 1px #414141; }
.fillstroke { margin: 10px 0 0 9px; }
.seg { display: flex; margin: 6px 0 0 8px; width: 89px; height: 30px; border: 1px solid #414141; border-radius: 4px; overflow: hidden; }
.seg button { flex: 1; border-left: 1px solid #414141; }
.seg button:first-child { border: 0; box-shadow: none; }
.seg.low { margin-top: 8px; height: 29px; }
.screen { margin: 11px 0 0 35px; }
.more { margin: 31px 0 0 41px; }

.doc { flex: 1; min-width: 0; margin-left: 4px; display: flex; flex-direction: column; background: #323232; }
.tabs { height: 43px; flex: none; background: #262626; border-bottom: 1px solid #151515; display: flex; }
.tab { background: #323232; display: flex; align-items: center; gap: 22px; padding: 0 10px 0 15px; font-size: 16px; font-weight: 600; white-space: nowrap; }
.stage { flex: 1; min-height: 0; display: flex; }
.canvas { flex: 1; min-width: 0; background: #fefefe; overflow: hidden; }
.canvas svg { width: 100%; height: 100%; }
.canvas text { fill: #222; font-size: 14px; }
.g { fill: none; stroke: #b0b0b0; stroke-width: 3; }
.k { fill: none; stroke: #000; stroke-width: 3; }
.k2 { stroke: #000; stroke-width: 2; }
.p { fill: none; stroke: #ec6be8; stroke-width: 2; }
.p3w { stroke-width: 3; }
.anchor { fill: none; stroke: #5a4ab8; stroke-width: 2; }
.vscroll, .hscroll { display: flex; align-items: center; justify-content: space-between; background: #292929; }
.vscroll { width: 24px; flex: none; flex-direction: column; padding: 9px 0; }
.vscroll svg .ln2, .hscroll .ln2 { stroke: #999; }
.vscroll i { width: 22px; height: 38px; border-radius: 10px; background: #404040; margin-bottom: 246px; }
.vscroll svg, .hscroll svg { opacity: .7; }
.statusbar { flex: none; height: 24px; display: flex; padding-left: 6px; }
.sf { display: flex; width: 102px; background: #262626; border: 1px solid #3c3c3c; margin-right: 7px; }
.sf input { flex: 1; padding: 6px 0 0 2px; }
.sf button { width: 26px; border-left: 1px solid #3c3c3c; padding-top: 5px; }
.nav + .sf { width: 88px; margin: 0; }
.nav { width: 55px; display: flex; align-items: center; gap: 14px; padding: 1px 0 0 6px; }
.sf + .nav:not(.off) { width: 62px; padding-left: 15px; }
.toolname { width: 302px; text-align: center; color: #9c9c9c; padding-top: 5px; border: solid #2b2b2b; border-width: 0 1px; }
.play { width: 26px; }
.hscroll { flex: 1; margin: 1px 24px 0 0; padding: 0 8px; }
.hscroll i { width: 37px; height: 21px; border-radius: 10px; background: #404040; margin-right: -2px; }

.dock { width: 55px; flex: none; margin-left: 5px; display: flex; flex-direction: column; }
.dock .strip { padding-right: 8px; }
.dg { background: #323232; height: 60px; margin-bottom: 1px; display: flex; flex-direction: column; align-items: center; flex: none; }
.dg.big { height: 102px; }
.dg.rest { flex: 1; margin: 0; }
.dg > button { margin-top: 8px; }
.dg > .para { margin-top: 13px; }
.script { font: 36px/34px "DejaVu Serif", serif; color: #b8b8b8; }
.char { font: 600 28px/30px "Noto Sans", sans-serif; color: #b8b8b8; gap: 2px; }
.char i { width: 2px; height: 27px; background: #b8b8b8; }

.panels { width: 362px; flex: none; margin-left: 5px; display: flex; flex-direction: column; }
.panel { background: #323232; flex: none; margin-bottom: 4px; }
.p1 { height: 225px; }
.p2 { height: 197px; }
.p3 { height: 305px; }
.p4 { flex: 1; margin: 0; min-height: 0; }
.ptabs { height: 41px; background: #262626; display: flex; }
.ptabs button { font-weight: 700; font-size: 14px; color: #929292; border-right: 1px solid #222; padding-bottom: 3px; white-space: nowrap; gap: 6px; }
.ptabs .act { background: #323232; color: #f2f2f2; }
.ptabs .pm { margin-left: auto; margin-right: 9px; border: 0; padding: 0; }
.w94 { width: 94px; } .w202 { width: 202px; } .w97 { width: 97px; } .w134 { width: 134px; }
.w89 { width: 89px; } .w102 { width: 102px; } .w90 { width: 90px; } .w104 { width: 104px; }
.pb { padding: 9px 7px 0; }
.swtop { display: flex; justify-content: space-between; height: 52px; }
.toggle { display: flex; width: 73px; height: 34px; border: 1px solid #414141; border-radius: 4px; overflow: hidden; margin-top: 1px; }
.toggle button { flex: 1; }
.swlist { display: flex; height: 94px; border: 1px solid #404040; background: #303030; overflow: hidden; }
.swatches { flex: 1; min-width: 0; }
.swrow { display: grid; grid-template-columns: repeat(15, 20px); grid-auto-rows: 20px; gap: 1px; }
.second { margin-top: 4px; }
.swatch { background: #fff; }
.sw-none { background: linear-gradient(135deg, #fff 46%, #cf2a1b 46% 54%, #fff 54%); }
.sw-reg { background: linear-gradient(#555, #555) 50% 50% / 1px 18px no-repeat, linear-gradient(#555, #555) 50% 50% / 18px 1px no-repeat, radial-gradient(circle, #fff 0 2px, #555 3px, #fff 4px 6px, #555 7px, #fff 8px); }
.sw-black { background: #000; border: 1px solid #fff; }
.sw-fade { background: linear-gradient(90deg, #ff8fae, transparent), repeating-conic-gradient(#ccc 0 25%, #fff 0 50%) 0 0 / 6px 6px; }
.sw-dots { background: radial-gradient(circle, transparent 8px, #fff 9px), repeating-conic-gradient(#d8cfb8 0 25%, #fff 0 50%) 0 0 / 6px 6px; }
.sw-blue { background: radial-gradient(circle at 30% 30%, transparent 2px, #a8cce8 3px, transparent 4px) 0 0 / 9px 8px, radial-gradient(circle at 70% 60%, #dcecf7 1px, transparent 2px) 0 0 / 6px 7px, #1a5fa8; }
.sw-leaf { background: radial-gradient(circle at 30% 30%, #8fbcb8 2px, transparent 3px) 0 0 / 9px 8px, radial-gradient(circle at 70% 60%, #c9d27c 1px, transparent 2px) 0 0 / 6px 7px, #e4e8cc; }
.sw-gap { background: none; }
.sw-group { background: linear-gradient(#b8b8b8, #b8b8b8) 2px 3px / 8px 2px no-repeat; }
.swscroll { width: 20px; background: #2a2a2a; display: flex; flex-direction: column; justify-content: space-between; align-items: center; padding: 4px 0; }
.swscroll svg { opacity: .7; }
.pf { display: flex; gap: 11px; padding: 1px 28px 0 5px; }
.pf button, .pf svg { width: 28px; height: 28px; }
.push { flex: 1; }

.trow { display: flex; align-items: center; height: 42px; padding-bottom: 10px; border-bottom: 1px solid #2b2b2b; }
.selw { position: relative; width: 148px; }
.selw select { appearance: none; width: 100%; height: 31px; border: 1px solid #424242; border-radius: 4px; background: #262626; padding: 3px 9px 0; }
.selw svg { position: absolute; right: 6px; top: 10px; }
.trow label { width: 88px; padding: 2px 0 0 8px; white-space: nowrap; }
.c-op2 { width: 105px; }
.mask { display: flex; justify-content: space-between; padding-top: 8px; }
.preview { width: 204px; height: 84px; border: 1px solid #292929; margin-top: 3px; }
.mopts { width: 140px; color: #585858; }
.mopts button { width: 100%; height: 30px; background: #383838; }
.mopts label { display: flex; align-items: center; gap: 7px; height: 19px; margin: 8px 0 0 1px; }
.mopts label + label { margin-top: 11px; }
.mopts input { appearance: none; width: 19px; height: 19px; border: 1px solid #585858; border-radius: 3px; }

.p3 .pb { padding-top: 0; color: #a4a4a4; }
.asec { height: 89px; padding-top: 12px; border-bottom: 1px solid #2b2b2b; }
.arow { display: flex; margin-top: 14px; gap: 26px; padding-left: 5px; }
.arow button, .arow svg, .srow svg { width: 28px; height: 28px; }
.arow i { width: 13px; }
.asplit { display: flex; padding-top: 11px; }
.space { width: 197px; border-right: 1px solid #2b2b2b; white-space: nowrap; }
.to { padding-left: 18px; }
.srow { display: flex; align-items: center; height: 38px; margin-top: 9px; }
.space .srow { gap: 20px; padding-left: 5px; }
.to .srow { gap: 9px; margin-left: 1px; }
.to button { width: 38px; height: 38px; border-radius: 4px; }
.cm { display: flex; align-items: center; gap: 10px; width: 86px; height: 31px; background: #363636; margin-left: -8px; padding-left: 8px; color: #555; }
.srow .cm svg { width: 12px; height: 22px; }
.cm input { width: 50px; }
.cm .ln { stroke: #555; }

.p4 .pb { padding-top: 9px; }
.boards { width: 100%; border-collapse: separate; border-spacing: 0; border: 1px solid #404040; border-radius: 3px; }
.boards td { height: 29px; padding: 0 8px; border-bottom: 1px solid #404040; border-right: 1px solid #3a3a3a; line-height: 20px; font-size: 15px; }
.boards tr:last-child td { border-bottom: 0; }
.boards td:first-child { width: 61px; font-size: 18px; color: #cfcfcf; }
.boards td:last-child { width: 62px; border-right: 0; }
.boards svg { height: 27px; }
.boards .sel { background: #354f69; }
.p4 .pf { padding-top: 0; }
.brand { position: fixed; right: 43px; bottom: 39px; width: 103px; height: 103px; border-radius: 50%; background: #fff; box-shadow: inset 0 0 6px #d8d8d8; display: flex; align-items: center; justify-content: center; }
```
